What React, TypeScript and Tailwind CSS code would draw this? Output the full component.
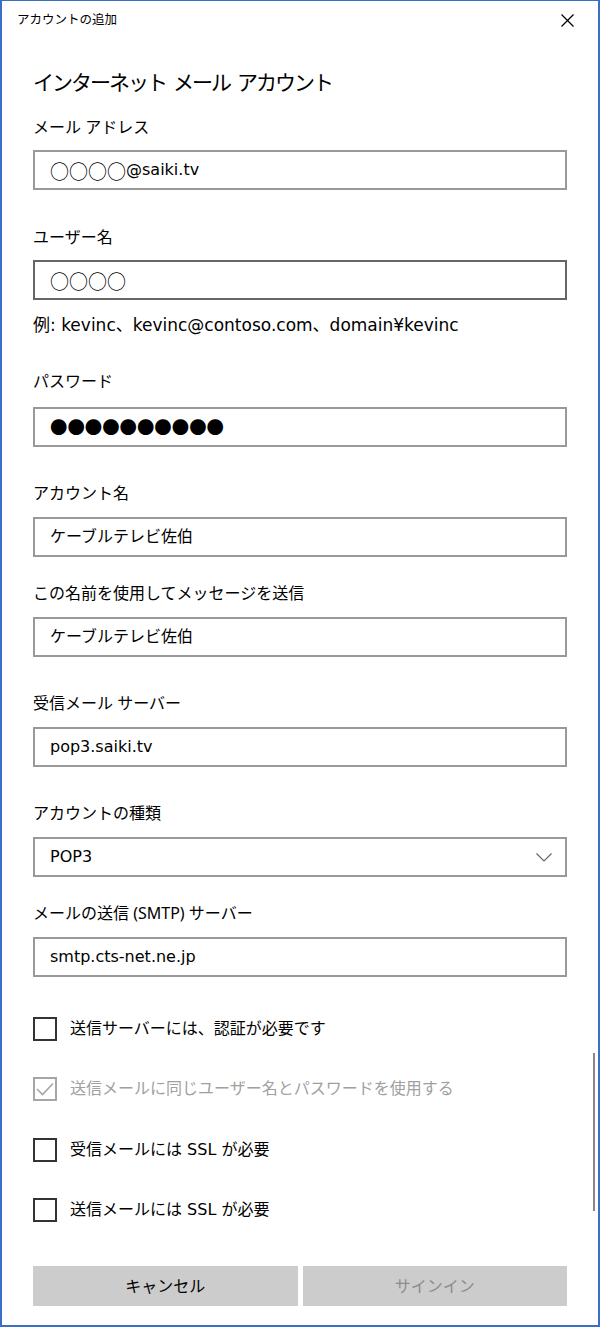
import React from "react";

const font = { fontFamily: '"Noto Sans", "Noto Sans CJK JP", sans-serif' };
const wide = { fontFamily: '"DejaVu Sans", "Noto Sans CJK JP", sans-serif' };
const cjk = { fontFamily: '"Noto Sans CJK JP", sans-serif' };

function Label({ children, mt }: { children: React.ReactNode; mt: string }) {
  return (
    <div className={`${mt} h-6 flex items-center text-[16px] leading-6 text-black`}>{children}</div>
  );
}

function Input({ children, mt, dark }: { children: React.ReactNode; mt: string; dark?: boolean }) {
  return (
    <div
      style={wide}
      className={`${mt} h-10 w-full border-2 ${dark ? "border-[#666666]" : "border-[#999999]"} bg-white flex items-center pl-[15px] text-[16px] text-black`}
    >
      {children}
    </div>
  );
}

function Circles() {
  return (
    <span style={cjk} className="text-[19px] leading-none">
      ○○○○
    </span>
  );
}

function Check({ children, mt, checked, disabled }: { children: React.ReactNode; mt: string; checked?: boolean; disabled?: boolean }) {
  return (
    <div className={`${mt} h-6 flex items-center`}>
      <div
        className={`w-6 h-6 border-2 ${disabled ? "border-[#a6a6a6]" : "border-[#333333]"} flex items-center justify-center`}
      >
        {checked && (
          <svg width="18" height="14" viewBox="0 0 18 14">
            <polyline points="1,7 6.5,12.5 17,1.5" fill="none" stroke="#a6a6a6" strokeWidth="1.6" />
          </svg>
        )}
      </div>
      <span style={wide} className={`ml-[13px] text-[16px] ${disabled ? "text-[#a0a0a0]" : "text-black"}`}>
        {children}
      </span>
    </div>
  );
}

export default function App() {
  return (
    <div
      style={font}
      className="relative w-[600px] h-[1327px] bg-white border-x-2 border-b-2 border-t border-[#3b6fc6] overflow-hidden"
    >
      <div className="h-[39px] flex items-center justify-between pl-[15px] pr-[24px]">
        <span className="text-[12.5px] text-black">アカウントの追加</span>
        <svg width="13" height="13" viewBox="0 0 13 13">
          <line x1="0.5" y1="0.5" x2="12.5" y2="12.5" stroke="#000" strokeWidth="1.2" />
          <line x1="12.5" y1="0.5" x2="0.5" y2="12.5" stroke="#000" strokeWidth="1.2" />
        </svg>
      </div>
      <div className="px-[31px] flex flex-col">
        <div className="mt-[27px] h-8 flex items-center gap-[7px] text-[21px] tracking-[-2px] text-black">
          <span>インターネット</span>
          <span>メール</span>
          <span>アカウント</span>
        </div>
        <Label mt="mt-[16px]">メール アドレス</Label>
        <Input mt="mt-[11px]">
          <Circles />
          <span>@saiki.tv</span>
        </Input>
        <Label mt="mt-[35px]">ユーザー名</Label>
        <Input mt="mt-[11px]" dark>
          <Circles />
        </Input>
        <div style={wide} className="mt-[14px] h-6 flex items-center text-[17px] text-black">
          例: kevinc、kevinc@contoso.com、domain¥kevinc
        </div>
        <Label mt="mt-[31px]">パスワード</Label>
        <Input mt="mt-[14px]">
          <span style={cjk} className="text-[17.4px] leading-none">
            ●●●●●●●●●●
          </span>
        </Input>
        <Label mt="mt-[34px]">アカウント名</Label>
        <Input mt="mt-[12px]">ケーブルテレビ佐伯</Input>
        <Label mt="mt-[24px]">この名前を使用してメッセージを送信</Label>
        <Input mt="mt-[12px]">ケーブルテレビ佐伯</Input>
        <Label mt="mt-[34px]">受信メール サーバー</Label>
        <Input mt="mt-[12px]">pop3.saiki.tv</Input>
        <Label mt="mt-[34px]">アカウントの種類</Label>
        <Input mt="mt-[12px]">
          <span className="flex-1">POP3</span>
          <svg className="mr-[13px]" width="16" height="9" viewBox="0 0 16 9">
            <polyline points="0.5,0.5 8,8 15.5,0.5" fill="none" stroke="#666" strokeWidth="1.2" />
          </svg>
        </Input>
        <Label mt="mt-[24px]">メールの送信 (SMTP) サーバー</Label>
        <Input mt="mt-[12px]">smtp.cts-net.ne.jp</Input>
        <Check mt="mt-[40px]">送信サーバーには、認証が必要です</Check>
        <Check mt="mt-[36px]" checked disabled>
          送信メールに同じユーザー名とパスワードを使用する
        </Check>
        <Check mt="mt-[37px]">受信メールには SSL が必要</Check>
        <Check mt="mt-[36px]">送信メールには SSL が必要</Check>
        <div className="mt-[44px] flex gap-[5px]">
          <div className="flex-1 h-10 bg-[#cccccc] flex items-center justify-center text-[16px] text-black">
            キャンセル
          </div>
          <div className="flex-1 h-10 bg-[#cccccc] flex items-center justify-center text-[16px] text-[#8c8c8c]">
            サインイン
          </div>
        </div>
      </div>
      <div className="absolute left-[591px] top-[1052px] w-[2px] h-[158px] bg-[#888888]" />
    </div>
  );
}
